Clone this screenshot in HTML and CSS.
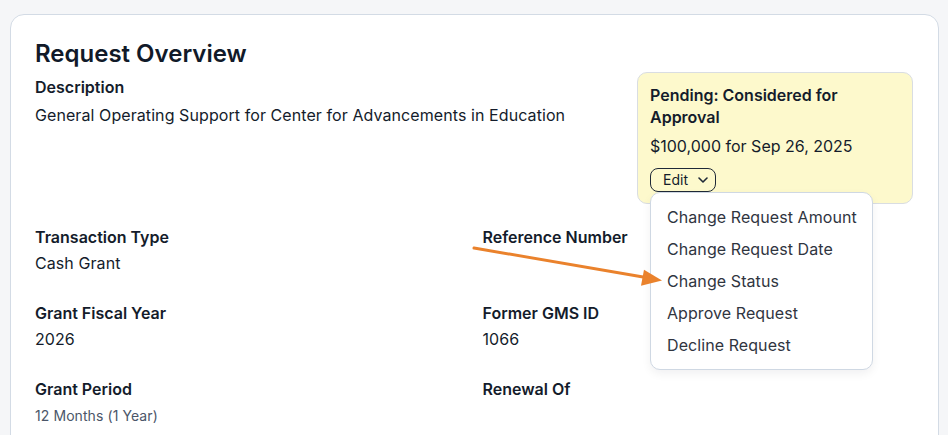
FILE: index.html
```html
<!DOCTYPE html>
<html lang="en">
<head>
<meta charset="utf-8">
<title>Request Overview</title>
<link rel="stylesheet" href="styles.css">
</head>
<body>
<div class="page">
  <section class="card">
    <h1 class="title">Request Overview</h1>
    <div class="top">
      <div class="desc">
        <div class="label">Description</div>
        <div class="value desc-value">General Operating Support for Center for Advancements in Education</div>
      </div>
      <div class="status">
        <div class="status-title">Pending: Considered for Approval</div>
        <div class="status-amount">$100,000 for Sep 26, 2025</div>
        <div class="edit-wrap">
          <button class="edit" type="button">Edit
            <svg class="chev" width="10" height="6" viewBox="0 0 10 6" aria-hidden="true"><path d="M1 1 L5 5 L9 1" fill="none" stroke="#1f2937" stroke-width="1.6" stroke-linecap="round" stroke-linejoin="round"/></svg>
          </button>
          <ul class="menu">
            <li class="menu-item">Change Request Amount</li>
            <li class="menu-item">Change Request Date</li>
            <li class="menu-item">Change Status</li>
            <li class="menu-item">Approve Request</li>
            <li class="menu-item">Decline Request</li>
          </ul>
        </div>
      </div>
    </div>
    <div class="grid">
      <div class="field">
        <div class="label">Transaction Type</div>
        <div class="value">Cash Grant</div>
      </div>
      <div class="field">
        <div class="label">Reference Number</div>
        <div class="value"></div>
      </div>
      <div class="field">
        <div class="label">Grant Fiscal Year</div>
        <div class="value">2026</div>
      </div>
      <div class="field">
        <div class="label">Former GMS ID</div>
        <div class="value">1066</div>
      </div>
      <div class="field">
        <div class="label">Grant Period</div>
        <div class="value small">12 Months (1 Year)</div>
      </div>
      <div class="field">
        <div class="label">Renewal Of</div>
        <div class="value small"></div>
      </div>
    </div>
  </section>
  <svg class="arrow" width="948" height="435" viewBox="0 0 948 435" aria-hidden="true">
    <line x1="474" y1="248" x2="646" y2="277.5" stroke="#ea822c" stroke-width="3" stroke-linecap="round"/>
    <polygon points="662,280.5 641,285.8 644,269.8" fill="#ea822c"/>
  </svg>
</div>
</body>
</html>
```
FILE: styles.css
```css
* { box-sizing: border-box; }
html, body {
  margin: 0;
  padding: 0;
  background: #f5f6f8;
  font-family: Inter, "Noto Sans", "Liberation Sans", sans-serif;
  color: #141c2b;
}
.page {
  position: relative;
  padding: 14px 9px 0 10px;
  height: 435px;
  overflow: hidden;
}
.card {
  background: #ffffff;
  border: 1px solid #d3dbe5;
  border-radius: 14px;
  padding: 23px 24px 40px;
}
.title {
  margin: 0 0 2px;
  font-size: 24px;
  line-height: 32px;
  font-weight: 600;
  color: #111a29;
}
.top {
  display: flex;
  align-items: flex-start;
  gap: 24px;
}
.desc {
  flex: 1;
  padding-top: 3px;
}
.label {
  font-size: 16px;
  line-height: 24px;
  font-weight: 600;
  color: #141c2b;
}
.value {
  font-size: 16px;
  line-height: 24px;
  font-weight: 400;
  letter-spacing: 0.08px;
  color: #141c2b;
  min-height: 24px;
  margin-top: 2px;
}
.desc-value { margin-top: 4px; }
.value.small {
  font-size: 14px;
  line-height: 20px;
  min-height: 20px;
  margin-top: 5px;
  color: #4b5669;
}
.status {
  width: 276px;
  flex: none;
  margin-right: 1px;
  background: #fdf9cc;
  border: 1px solid #d9dde2;
  border-radius: 10px;
  padding: 11px 12px 11px;
}
.status-title {
  font-size: 16px;
  line-height: 22px;
  font-weight: 600;
  color: #141c2b;
}
.status-amount {
  margin-top: 6px;
  font-size: 16px;
  line-height: 24px;
  color: #141c2b;
}
.edit-wrap {
  position: relative;
  display: inline-block;
  margin-top: 10px;
  vertical-align: top;
}
.edit {
  display: flex;
  align-items: center;
  gap: 10px;
  height: 24px;
  padding: 0 7px 0 12px;
  background: transparent;
  border: 1px solid #1f2937;
  border-radius: 8px;
  font-family: inherit;
  font-size: 14px;
  line-height: 22px;
  color: #141c2b;
}
.chev { display: block; }
.menu {
  position: absolute;
  top: 100%;
  left: 0;
  width: 223px;
  margin: 0;
  padding: 8px 0;
  list-style: none;
  background: #ffffff;
  border: 1px solid #cfd8e3;
  border-radius: 10px;
  box-shadow: 0 4px 10px rgba(15, 23, 42, 0.06);
  z-index: 2;
}
.menu-item {
  padding: 0 16px;
  font-size: 16px;
  line-height: 32px;
  letter-spacing: 0.08px;
  color: #30353f;
  white-space: nowrap;
}
.grid {
  margin-top: 21px;
  display: grid;
  grid-template-columns: 1fr 1fr;
  column-gap: 16px;
  row-gap: 26px;
}
.arrow {
  position: absolute;
  left: 0;
  top: 0;
  pointer-events: none;
  z-index: 3;
}
```
